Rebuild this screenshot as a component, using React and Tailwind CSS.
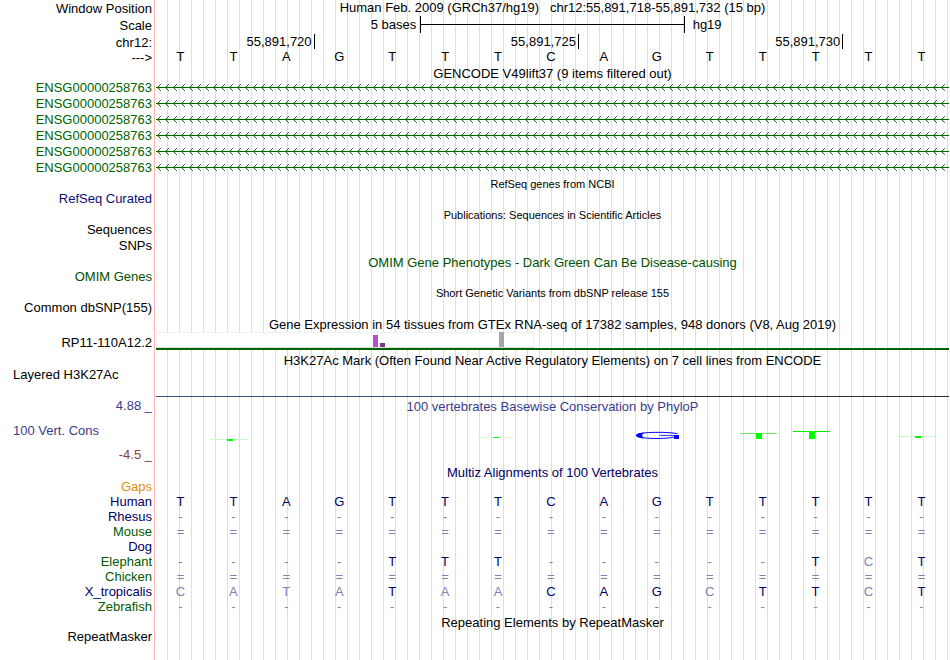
const BASES = 'TTAGTTTCAGTTTTT'.split('');

const transcripts = Array(6).fill('ENSG00000258763');

const species = [
  { name: 'Human', color: 'text-[#000064]', seq: 'TTAGTTTCAGTTTTT' },
  { name: 'Rhesus', color: 'text-[#000064]', seq: '---------------' },
  { name: 'Mouse', color: 'text-[#005a00]', seq: '===============' },
  { name: 'Dog', color: 'text-[#000064]', seq: '               ' },
  { name: 'Elephant', color: 'text-[#005a00]', seq: '----TTT-----TCT' },
  { name: 'Chicken', color: 'text-[#005a00]', seq: '===============' },
  { name: 'X_tropicalis', color: 'text-[#000064]', seq: 'CATATAACAGCTTCT' },
  { name: 'Zebrafish', color: 'text-[#005a00]', seq: '---------------' },
];

// fill = colour of the horizontal stroke, height = stem height
const logoTs = [
  { x: 55, y: 25, height: 2, fill: '#c8fac8' },
  { x: 321, y: 23, height: 1, fill: '#e0fae0' },
  { x: 584, y: 19, height: 6, fill: '#64f064' },
  { x: 637, y: 17, height: 8, fill: '#00f000' },
  { x: 743, y: 22, height: 2, fill: '#c0f8c0' },
];

function Row({ label, labelClass = '', className = 'h-4', children }) {
  return (
    <div className={`flex ${className}`}>
      <div className={`w-[154px] shrink-0 pr-0.5 text-right ${labelClass}`}>{label}</div>
      <div className="ml-0.5 mr-px min-w-0 flex-1">{children}</div>
    </div>
  );
}

function Title({ children, label, labelClass, small, color = 'text-black' }) {
  return (
    <Row label={label} labelClass={labelClass} className="h-[15px]">
      <h2 className={`text-center ${small ? 'text-[11px]' : 'pt-px'} ${color}`}>{children}</h2>
    </Row>
  );
}

function Intron() {
  return (
    <svg className="block h-4 w-full" aria-hidden="true">
      <defs>
        <pattern id="chevron" width="8" height="16" patternUnits="userSpaceOnUse">
          <path d="M4.8 4.2 L1.5 7.5 L4.8 10.8" fill="none" stroke="#006400" strokeWidth="1" />
        </pattern>
      </defs>
      <rect width="100%" height="16" fill="url(#chevron)" />
      <rect y="7" width="100%" height="1" fill="#006400" />
    </svg>
  );
}

function GtexBars() {
  return (
    <svg className="block h-4 w-[378px]" viewBox="0 0 378 16" aria-hidden="true">
      <rect width="378" height="16" fill="#f0f0f0" />
      <rect x="1" y="1" width="376" height="14" fill="#fff" />
      <rect y="15" width="378" height="1" fill="#dcdcdc" />
      <rect x="217" y="3" width="5" height="12" fill="#b452cd" />
      <rect x="224" y="11" width="5" height="4" fill="#7a378b" />
      <rect x="343" y="0" width="5" height="15" fill="#a6a6a6" />
    </svg>
  );
}

function PhyloP() {
  return (
    <svg className="block h-[51px] w-full" viewBox="0 0 793 51" preserveAspectRatio="none" aria-hidden="true">
      {logoTs.map((t) => (
        <g key={t.x}>
          <rect x={t.x} y={t.y} width="37" height="1" fill={t.fill} />
          <rect x={t.x + 16} y={t.y} width="6" height={t.height} fill="#00ff00" />
        </g>
      ))}
      <g fill="none" stroke="#0000ff">
        <path d="M521.5 19.8 C516 17.8 481 17.4 481 21.4 C481 25.2 513 25.4 519 22.6" />
        <path d="M503.5 21.4 H519" strokeWidth="0.8" />
      </g>
      <path d="M480 21.4 C480 20 483 19 488 18.6 C485.5 20.5 485.5 22.5 488 24.3 C483 23.8 480 22.8 480 21.4 Z" fill="#0000ff" />
      <rect x="518" y="21" width="5" height="4" fill="#0000ff" />
    </svg>
  );
}

function Alignment() {
  return (
    <div className="mr-0.5">
      <table className="w-full table-fixed border-collapse">
        <tbody>
          {species.map((s) => (
            <tr key={s.name} className="h-[15px] leading-[15px]">
              <th scope="row" className={`w-[154px] p-0 pr-0.5 text-right font-normal ${s.color}`}>
                {s.name}
              </th>
              {s.seq.split('').map((c, i) => (
                <td key={i} className={`p-0 text-center ${c === BASES[i] ? 'text-[#000064]' : 'text-[#8080b4]'}`}>
                  {c}
                </td>
              ))}
            </tr>
          ))}
        </tbody>
      </table>
    </div>
  );
}

export default function App() {
  return (
    <main className="grid min-h-screen bg-white font-['Liberation_Sans',Arial,sans-serif] text-[13px] leading-4 whitespace-nowrap text-black">
      {/* guide lines */}
      <div className="col-start-1 row-start-1 flex" aria-hidden="true">
        <div className="w-[154px] shrink-0" />
        <div className="w-px bg-[#ffb4b4]" />
        <div className="ml-3 flex-1 bg-[linear-gradient(to_right,#dcdcf8_1px,transparent_1px)] bg-size-[12px_100%]" />
      </div>

      <div className="col-start-1 row-start-1">
        <Row label="Window Position" labelClass="pt-px">
          <h1 className="text-center whitespace-pre">Human Feb. 2009 (GRCh37/hg19)   chr12:55,891,718-55,891,732 (15 bp)</h1>
        </Row>

        <Row label="Scale" labelClass="pt-0.5" className="h-[18px]">
          <div className="grid h-4 grid-cols-3">
            <div className="pt-px pr-1 text-right">5 bases</div>
            <div className="flex items-center border-x border-black">
              <div className="h-px flex-1 bg-black" />
            </div>
            <div className="pt-px pl-2">hg19</div>
          </div>
        </Row>

        <Row label="chr12:" labelClass="pt-px">
          <div className="grid grid-cols-[3fr_5fr_5fr_2fr] text-right">
            <div className="h-[15px] border-r border-black pr-0.5">55,891,720</div>
            <div className="h-[15px] border-r border-black pr-0.5">55,891,725</div>
            <div className="h-[15px] border-r border-black pr-0.5">55,891,730</div>
          </div>
        </Row>

        <Row label="--->" className="h-[15px]">
          <div className="-ml-0.5 mr-px grid grid-cols-15 text-center leading-[14px]">
            {BASES.map((b, i) => (
              <span key={i}>{b}</span>
            ))}
          </div>
        </Row>

        <Title>GENCODE V49lift37 (9 items filtered out)</Title>
        {transcripts.map((id, i) => (
          <Row key={i} label={id} labelClass="text-[#006400]">
            <Intron />
          </Row>
        ))}

        <Title small>RefSeq genes from NCBI</Title>
        <Row label="RefSeq Curated" labelClass="text-[#0c0c78]" />

        <Title small>Publications: Sequences in Scientific Articles</Title>
        <Row label="Sequences" />
        <Row label="SNPs" />

        <Title color="text-[#005000]">OMIM Gene Phenotypes - Dark Green Can Be Disease-causing</Title>
        <Row label="OMIM Genes" labelClass="text-[#005000]" />

        <Title small>Short Genetic Variants from dbSNP release 155</Title>
        <Row label="Common dbSNP(155)" />

        <Title>Gene Expression in 54 tissues from GTEx RNA-seq of 17382 samples, 948 donors (V8, Aug 2019)</Title>
        <Row label="RP11-110A12.2" labelClass="pt-1" className="h-[21px]">
          <div className="pt-px">
            <GtexBars />
            <div className="h-0.5 bg-[#006400]" />
          </div>
        </Row>

        <Title>H3K27Ac Mark (Often Found Near Active Regulatory Elements) on 7 cell lines from ENCODE</Title>
        <Row label={<div className="pl-[13px] text-left">Layered H3K27Ac</div>} className="h-[31px]">
          <div className="flex pt-[29px]">
            <div className="h-px flex-8 bg-[#3c5082]" />
            <div className="h-px flex-7 bg-[#402840]" />
          </div>
        </Row>

        <Title label="4.88 _" labelClass="text-[#3c3c8c]" color="text-[#3c3c8c]">
          100 vertebrates Basewise Conservation by PhyloP
        </Title>
        <Row
          className="h-[51px]"
          label={
            <>
              <div className="pt-2.5 pl-[13px] text-left text-[#3c3c8c]">100 Vert. Cons</div>
              <div className="pt-2 text-[#8c3c3c]">-4.5 _</div>
            </>
          }
        >
          <div className="pt-px">
            <PhyloP />
          </div>
        </Row>

        <Title color="text-[#000064]">Multiz Alignments of 100 Vertebrates</Title>
        <Row label="Gaps" labelClass="text-[#e68c14]" className="h-[15px]" />
        <Alignment />

        <Title>Repeating Elements by RepeatMasker</Title>
        <Row label="RepeatMasker" />
      </div>
    </main>
  );
}
